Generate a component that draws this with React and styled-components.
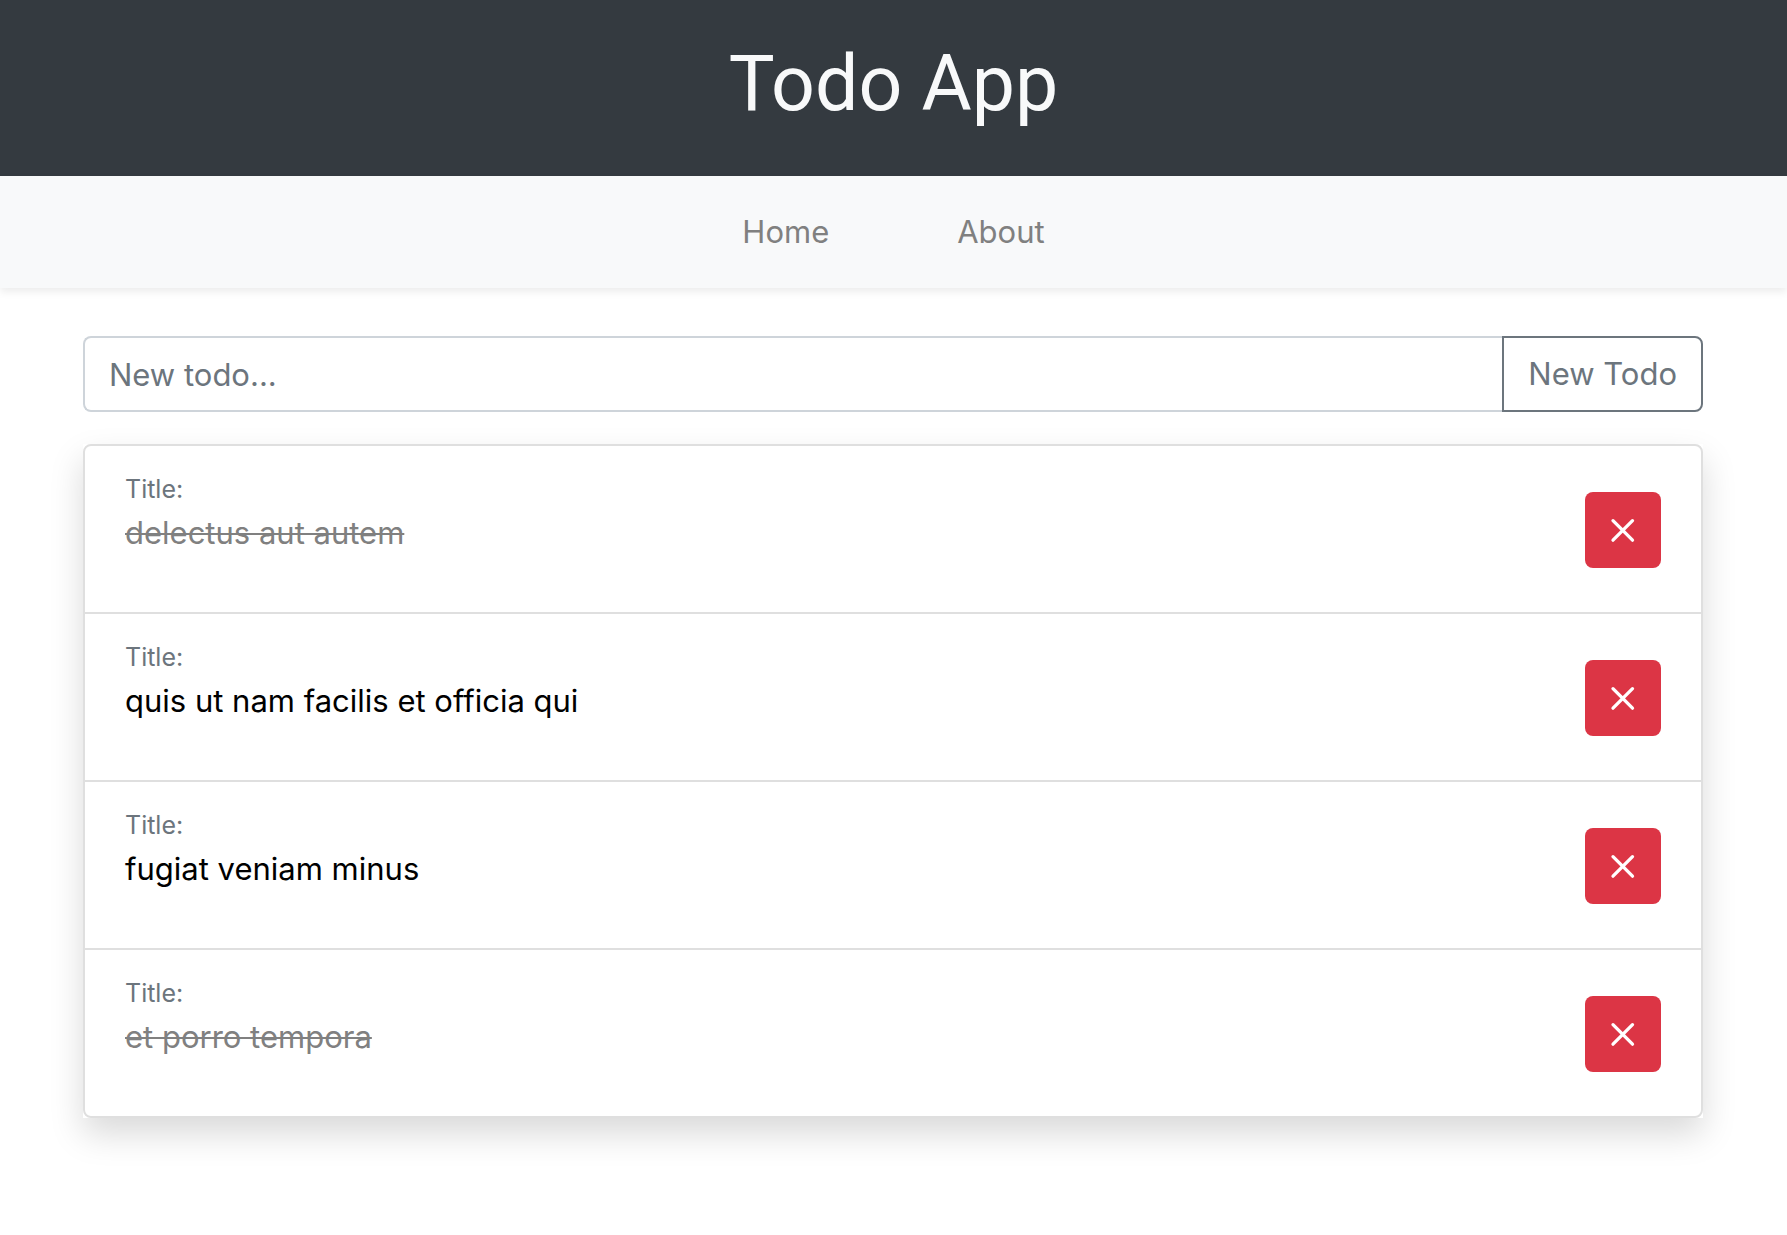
import React, { useState } from "react";
import styled, { createGlobalStyle } from "styled-components";

const GlobalStyle = createGlobalStyle`
  *, *::before, *::after { box-sizing: border-box; }
  body {
    margin: 0;
    background: #fff;
    color: #000;
    font-family: Inter, "Liberation Sans", sans-serif;
    font-size: 31px;
    line-height: 48px;
  }
  button, input { font: inherit; margin: 0; }
`;

const Header = styled.header`
  padding: 36px 32px 44px;
  background: #343a40;
  text-align: center;
`;

const Heading = styled.h1`
  margin: 0;
  color: #f8f9fa;
  font-family: Roboto, Inter, sans-serif;
  font-size: 77px;
  font-weight: 400;
  line-height: 96px;
`;

const Nav = styled.nav`
  display: flex;
  justify-content: center;
  gap: 128px;
  padding: 32px;
  background: #f8f9fa;
  box-shadow: 0 4px 8px rgba(0, 0, 0, 0.075);
`;

const NavLink = styled.a`
  color: #808080;
  text-decoration: none;
`;

const Main = styled.main`
  padding: 48px 84px 48px 83px;
`;

const Form = styled.form`
  display: flex;
  margin-bottom: 32px;
`;

const TextInput = styled.input`
  flex: 1;
  min-width: 0;
  height: 76px;
  padding: 12px 24px;
  border: 2px solid #ced4da;
  border-right: 0;
  border-radius: 8px 0 0 8px;
  background: #fff;
  color: #495057;
  &::placeholder { color: #6c757d; opacity: 1; }
`;

const SubmitButton = styled.button`
  height: 76px;
  padding: 12px 24px;
  border: 2px solid #6c757d;
  border-radius: 0 8px 8px 0;
  background: transparent;
  color: #6c757d;
  cursor: pointer;
`;

const Panel = styled.section`
  box-shadow: 0 16px 32px rgba(0, 0, 0, 0.15);
`;

const List = styled.ul`
  margin: 0;
  padding: 0;
  list-style: none;
  border: 2px solid #dfdfdf;
  border-radius: 8px;
`;

const Item = styled.li`
  display: flex;
  align-items: center;
  justify-content: space-between;
  padding: 24px 40px 22px;
  & + & { border-top: 2px solid #dfdfdf; }
`;

const Details = styled.div`
  display: flex;
  flex-direction: column;
  padding-bottom: 33px;
`;

const Label = styled.small`
  color: #6c757d;
  font-size: 25px;
  line-height: 39px;
`;

const Title = styled.span`
  color: ${(p) => (p.$done ? "#808080" : "#000")};
  text-decoration: ${(p) => (p.$done ? "line-through" : "none")};
  text-decoration-thickness: 2px;
`;

const DeleteButton = styled.button`
  display: flex;
  align-items: center;
  justify-content: center;
  width: 76px;
  height: 76px;
  padding: 0;
  border: 0;
  border-radius: 8px;
  background: #dc3545;
  color: #fff;
  cursor: pointer;
`;

const CloseIcon = () => (
  <svg width="32" height="32" viewBox="0 0 32 32" fill="none" stroke="currentColor" strokeWidth="3.3" strokeLinecap="round" aria-hidden="true">
    <path d="M6 6.7l19.5 19.5M25.5 6.7L6 26.2" />
  </svg>
);

const initialTodos = [
  { id: 1, title: "delectus aut autem", done: true },
  { id: 2, title: "quis ut nam facilis et officia qui", done: false },
  { id: 3, title: "fugiat veniam minus", done: false },
  { id: 4, title: "et porro tempora", done: true },
];

export default function App() {
  const [todos, setTodos] = useState(initialTodos);
  const [draft, setDraft] = useState("");

  const addTodo = (event) => {
    event.preventDefault();
    if (!draft.trim()) return;
    setTodos([...todos, { id: Date.now(), title: draft.trim(), done: false }]);
    setDraft("");
  };

  return (
    <>
      <GlobalStyle />
      <Header>
        <Heading>Todo App</Heading>
      </Header>
      <Nav>
        <NavLink href="#home">Home</NavLink>
        <NavLink href="#about">About</NavLink>
      </Nav>
      <Main>
        <Form onSubmit={addTodo}>
          <TextInput
            type="text"
            aria-label="New todo"
            placeholder="New todo..."
            value={draft}
            onChange={(event) => setDraft(event.target.value)}
          />
          <SubmitButton type="submit">New Todo</SubmitButton>
        </Form>
        <Panel>
          <List>
            {todos.map((todo) => (
              <Item key={todo.id}>
                <Details>
                  <Label>Title:</Label>
                  <Title $done={todo.done}>{todo.title}</Title>
                </Details>
                <DeleteButton
                  type="button"
                  aria-label={`Delete ${todo.title}`}
                  onClick={() => setTodos(todos.filter((t) => t.id !== todo.id))}
                >
                  <CloseIcon />
                </DeleteButton>
              </Item>
            ))}
          </List>
        </Panel>
      </Main>
    </>
  );
}
